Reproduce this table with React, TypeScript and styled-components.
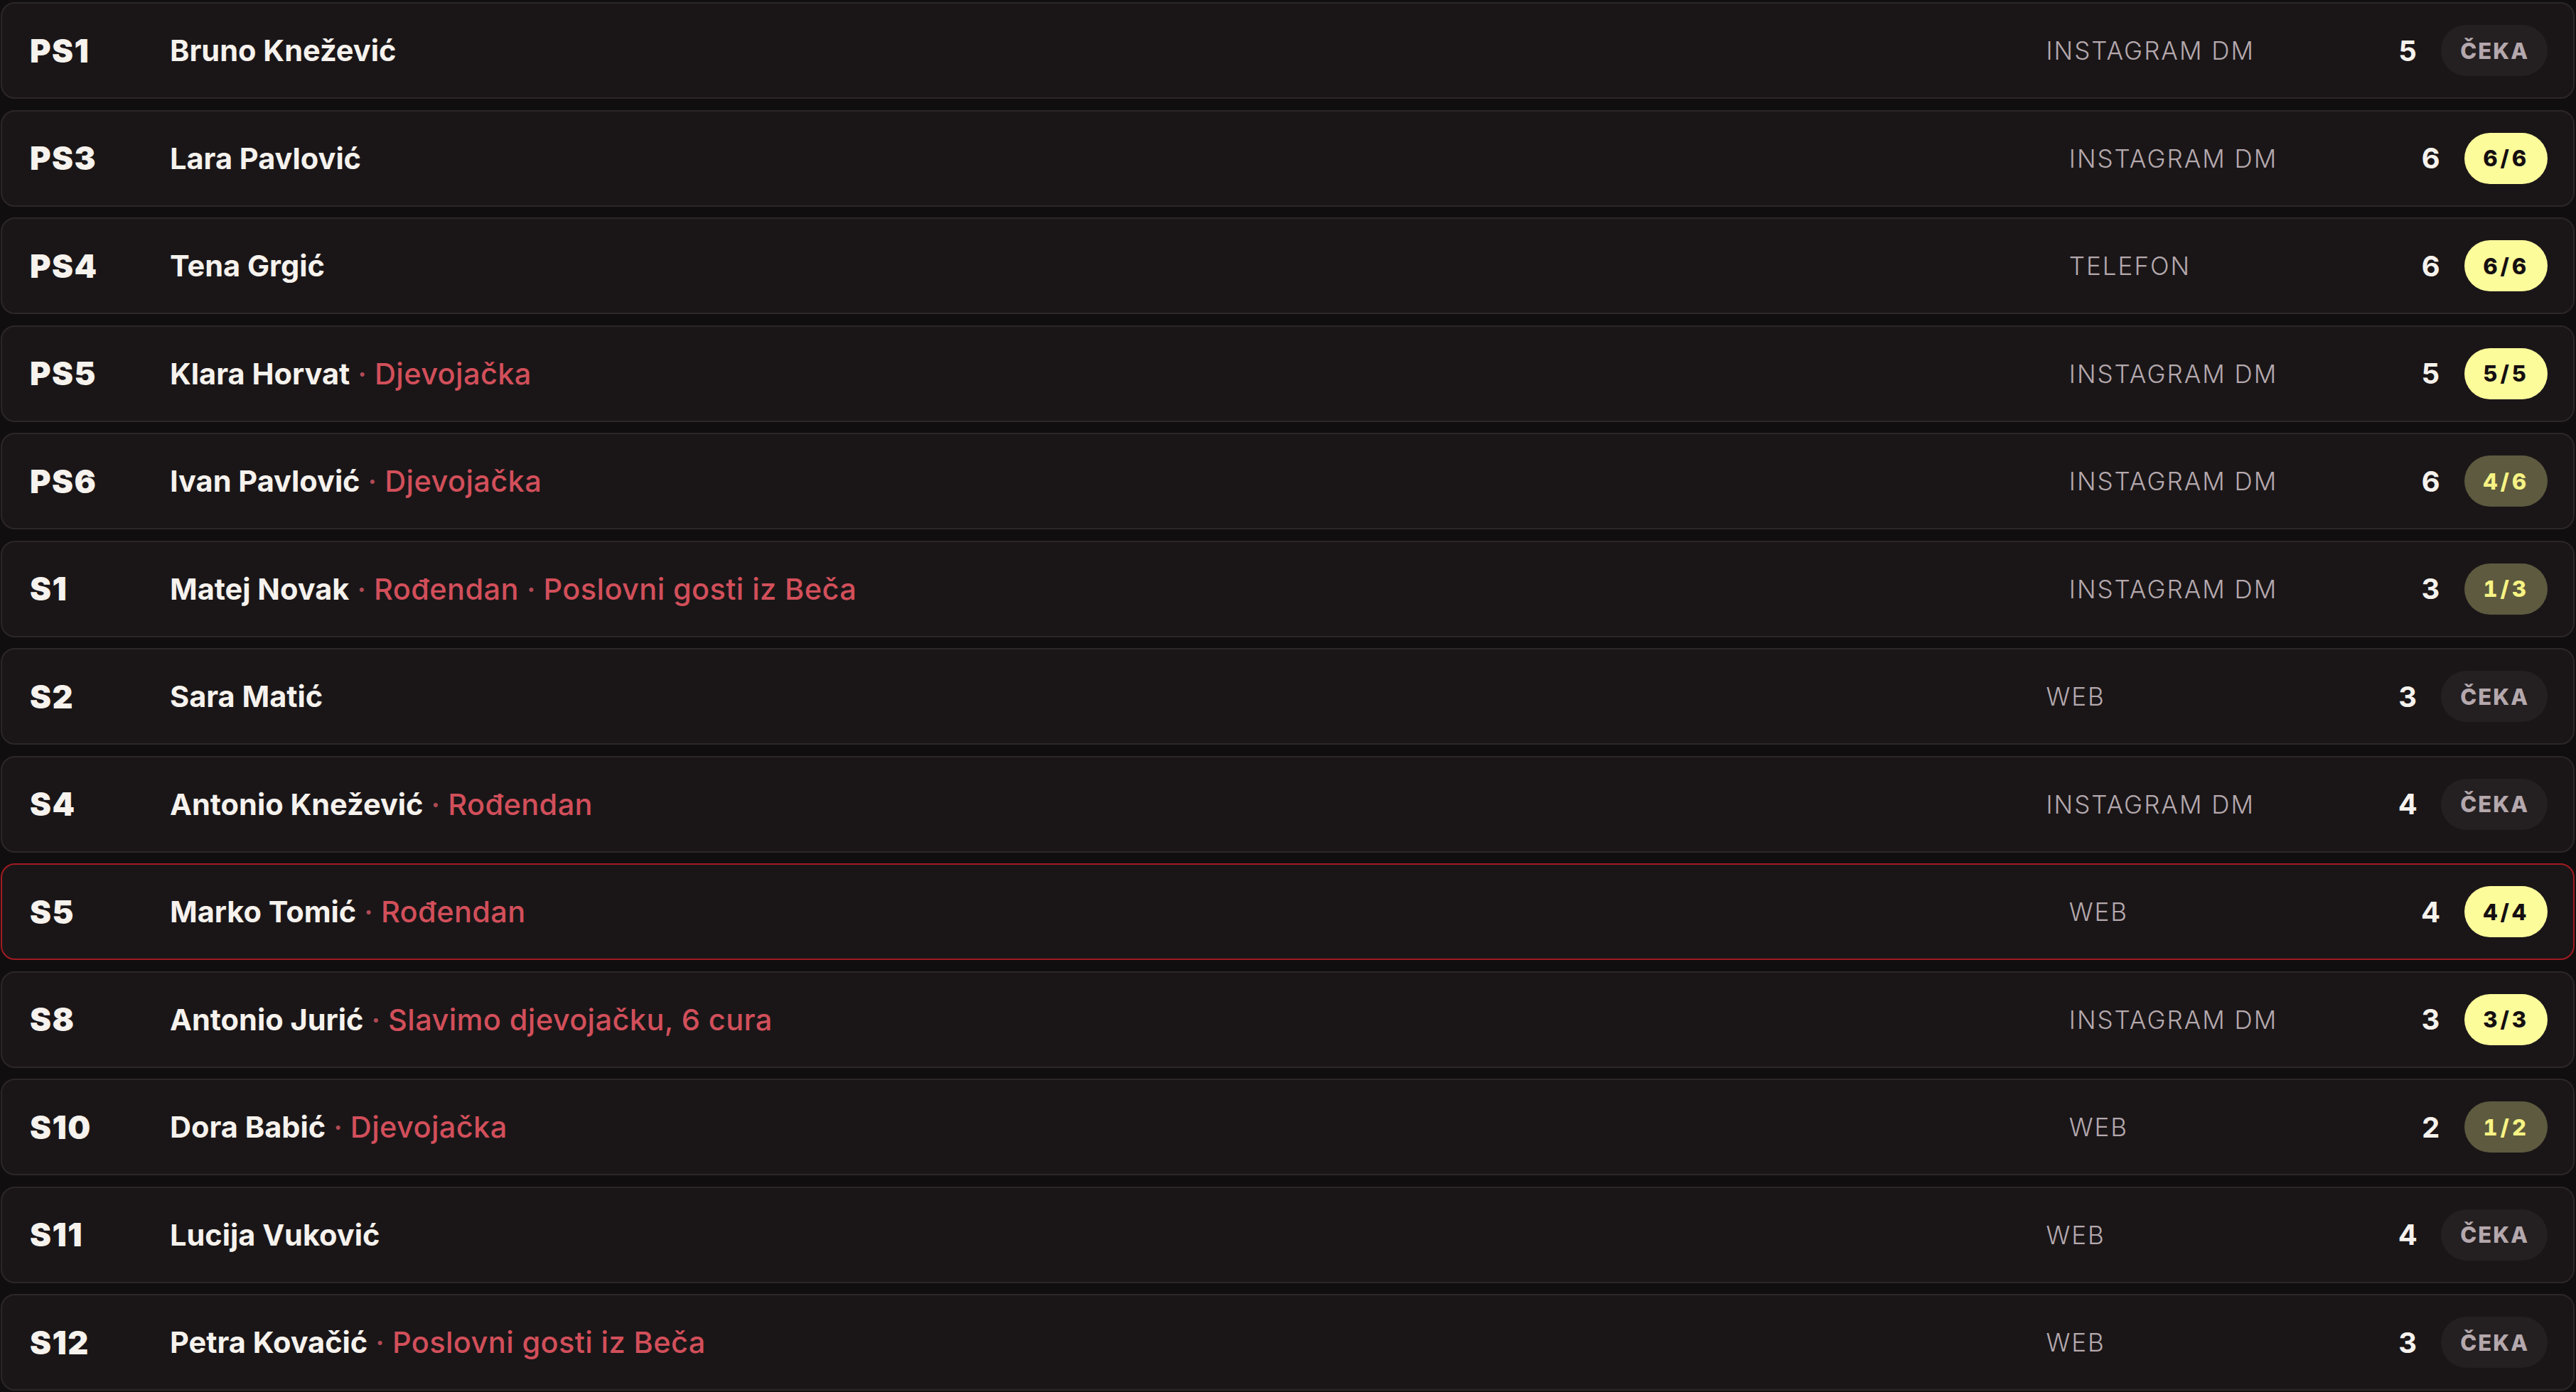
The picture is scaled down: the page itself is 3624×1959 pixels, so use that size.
import React from "react";
import styled, { createGlobalStyle } from "styled-components";

const Global = createGlobalStyle`
  html, body {
    margin: 0;
    padding: 0;
    background: #110e0f;
  }
  body {
    font-family: Inter, "Noto Sans", "Liberation Sans", sans-serif;
    -webkit-font-smoothing: antialiased;
  }
`;

type Status = "wait" | "full" | "partial";

interface Reservation {
  id: string;
  name: string;
  notes: string[];
  channel: string;
  count: number;
  status: Status;
  label: string;
  active?: boolean;
}

const data: Reservation[] = [
  { id: "PS1", name: "Bruno Knežević", notes: [], channel: "INSTAGRAM DM", count: 5, status: "wait", label: "ČEKA" },
  { id: "PS3", name: "Lara Pavlović", notes: [], channel: "INSTAGRAM DM", count: 6, status: "full", label: "6/6" },
  { id: "PS4", name: "Tena Grgić", notes: [], channel: "TELEFON", count: 6, status: "full", label: "6/6" },
  { id: "PS5", name: "Klara Horvat", notes: ["Djevojačka"], channel: "INSTAGRAM DM", count: 5, status: "full", label: "5/5" },
  { id: "PS6", name: "Ivan Pavlović", notes: ["Djevojačka"], channel: "INSTAGRAM DM", count: 6, status: "partial", label: "4/6" },
  { id: "S1", name: "Matej Novak", notes: ["Rođendan", "Poslovni gosti iz Beča"], channel: "INSTAGRAM DM", count: 3, status: "partial", label: "1/3" },
  { id: "S2", name: "Sara Matić", notes: [], channel: "WEB", count: 3, status: "wait", label: "ČEKA" },
  { id: "S4", name: "Antonio Knežević", notes: ["Rođendan"], channel: "INSTAGRAM DM", count: 4, status: "wait", label: "ČEKA" },
  { id: "S5", name: "Marko Tomić", notes: ["Rođendan"], channel: "WEB", count: 4, status: "full", label: "4/4", active: true },
  { id: "S8", name: "Antonio Jurić", notes: ["Slavimo djevojačku, 6 cura"], channel: "INSTAGRAM DM", count: 3, status: "full", label: "3/3" },
  { id: "S10", name: "Dora Babić", notes: ["Djevojačka"], channel: "WEB", count: 2, status: "partial", label: "1/2" },
  { id: "S11", name: "Lucija Vuković", notes: [], channel: "WEB", count: 4, status: "wait", label: "ČEKA" },
  { id: "S12", name: "Petra Kovačić", notes: ["Poslovni gosti iz Beča"], channel: "WEB", count: 3, status: "wait", label: "ČEKA" },
];

const List = styled.div`
  display: flex;
  flex-direction: column;
  gap: 15.5px;
  padding: 3px 2px 2px 1px;
`;

const Row = styled.div<{ $active?: boolean }>`
  display: flex;
  align-items: center;
  gap: 34px;
  height: 136px;
  box-sizing: border-box;
  padding: 0 36px 0 39px;
  background: #1a1618;
  border: 2px solid ${(p) => (p.$active ? "#a11b22" : "#2c2628")};
  border-radius: 20px;
`;

const Code = styled.div`
  flex: none;
  width: 163px;
  font-size: 45px;
  font-weight: 900;
  color: #f6f2ed;
  letter-spacing: 1.5px;
`;

const Name = styled.div`
  flex: 1;
  min-width: 0;
  font-size: 41.5px;
  font-weight: 700;
  color: #f6f2ed;
  white-space: nowrap;
`;

const Note = styled.span`
  font-weight: 500;
  letter-spacing: 0.4px;
  color: #d24f5a;
`;

const Dot = styled.span`
  font-weight: 500;
  color: #b04a54;
`;

const Channel = styled.div`
  flex: none;
  width: 462px;
  font-size: 35px;
  font-weight: 300;
  letter-spacing: 2px;
  color: #b5a9ae;
`;

const Count = styled.div`
  flex: none;
  font-size: 40px;
  font-weight: 700;
  color: #f6f2ed;
  font-variant-numeric: tabular-nums;
`;

const badgeColors: Record<Status, { bg: string; fg: string; spacing: string }> = {
  wait: { bg: "#241f21", fg: "#b4a8ad", spacing: "2px" },
  full: { bg: "#fdfc9b", fg: "#150f11", spacing: "4px" },
  partial: { bg: "#5d5a3f", fg: "#f7f384", spacing: "4px" },
};

const Badge = styled.div<{ $status: Status }>`
  flex: none;
  height: 72px;
  display: flex;
  align-items: center;
  box-sizing: border-box;
  padding: 0 26px 0 27px;
  border-radius: 36px;
  font-size: 31px;
  font-weight: 800;
  letter-spacing: ${(p) => badgeColors[p.$status].spacing};
  font-variant-numeric: tabular-nums;
  background: ${(p) => badgeColors[p.$status].bg};
  color: ${(p) => badgeColors[p.$status].fg};
`;

export default function App() {
  return (
    <>
      <Global />
      <List>
        {data.map((r) => (
          <Row key={r.id} $active={r.active}>
            <Code>{r.id}</Code>
            <Name>
              {r.name}
              {r.notes.map((n) => (
                <React.Fragment key={n}>
                  <Dot> · </Dot>
                  <Note>{n}</Note>
                </React.Fragment>
              ))}
            </Name>
            <Channel>{r.channel}</Channel>
            <Count>{r.count}</Count>
            <Badge $status={r.status}>{r.label}</Badge>
          </Row>
        ))}
      </List>
    </>
  );
}
